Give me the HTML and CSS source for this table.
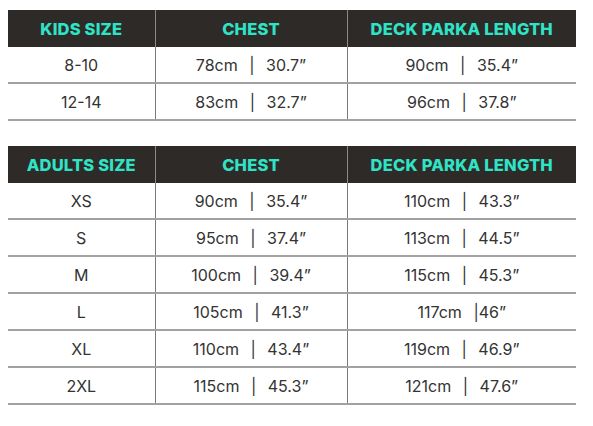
FILE: index.html
```html
<!DOCTYPE html>
<html lang="en">
<head>
<meta charset="utf-8">
<title>Size chart</title>
<link rel="stylesheet" href="styles.css">
</head>
<body>
<div class="page">
  <table class="chart">
    <colgroup><col class="c1"><col class="c2"><col class="c3"></colgroup>
    <thead>
      <tr><th>KIDS SIZE</th><th>CHEST</th><th>DECK PARKA LENGTH</th></tr>
    </thead>
    <tbody>
      <tr><td>8-10</td><td>78cm | 30.7”</td><td>90cm | 35.4”</td></tr>
      <tr><td>12-14</td><td>83cm | 32.7”</td><td>96cm | 37.8”</td></tr>
    </tbody>
  </table>
  <table class="chart">
    <colgroup><col class="c1"><col class="c2"><col class="c3"></colgroup>
    <thead>
      <tr><th>ADULTS SIZE</th><th>CHEST</th><th>DECK PARKA LENGTH</th></tr>
    </thead>
    <tbody>
      <tr><td>XS</td><td>90cm | 35.4”</td><td>110cm | 43.3”</td></tr>
      <tr><td>S</td><td>95cm | 37.4”</td><td>113cm | 44.5”</td></tr>
      <tr><td>M</td><td>100cm | 39.4”</td><td>115cm | 45.3”</td></tr>
      <tr><td>L</td><td>105cm | 41.3”</td><td>117cm <span class="tight">|46”</span></td></tr>
      <tr><td>XL</td><td>110cm | 43.4”</td><td>119cm | 46.9”</td></tr>
      <tr><td>2XL</td><td>115cm | 45.3”</td><td>121cm | 47.6”</td></tr>
    </tbody>
  </table>
</div>
</body>
</html>
```
FILE: styles.css
```css
html, body {
  margin: 0;
  padding: 0;
  background: #ffffff;
}
.page {
  padding: 10px 0 0 8px;
  width: 568px;
}
.chart {
  width: 568px;
  border-collapse: collapse;
  table-layout: fixed;
  margin-bottom: 25px;
}
.c1 { width: 147px; }
.c2 { width: 192px; }
.c3 { width: 229px; }
.chart th {
  background: #2e2a28;
  color: #2fe3c6;
  font-family: Inter, "DejaVu Sans", sans-serif;
  font-weight: 800;
  font-size: 16.5px;
  line-height: 20px;
  letter-spacing: 0.2px;
  height: 37px;
  padding: 0;
  text-align: center;
  border-left: 1px solid #8a8a8a;
  border-right: 1px solid #8a8a8a;
}
.chart th:first-child { border-left: none; }
.chart th:last-child { border-right: none; }
.chart td {
  font-family: Inter, "Liberation Sans", sans-serif;
  font-weight: 400;
  font-size: 16px;
  line-height: 18px;
  color: #333333;
  word-spacing: 7px;
  height: 35px;
  padding: 0;
  text-align: center;
  border-bottom: 2px solid #a2a2a2;
  border-left: 1px solid #7a7a7a;
  border-right: 1px solid #7a7a7a;
}
.chart td:first-child { border-left: none; }
.chart td:last-child { border-right: none; }
.tight { word-spacing: 0; }
```
